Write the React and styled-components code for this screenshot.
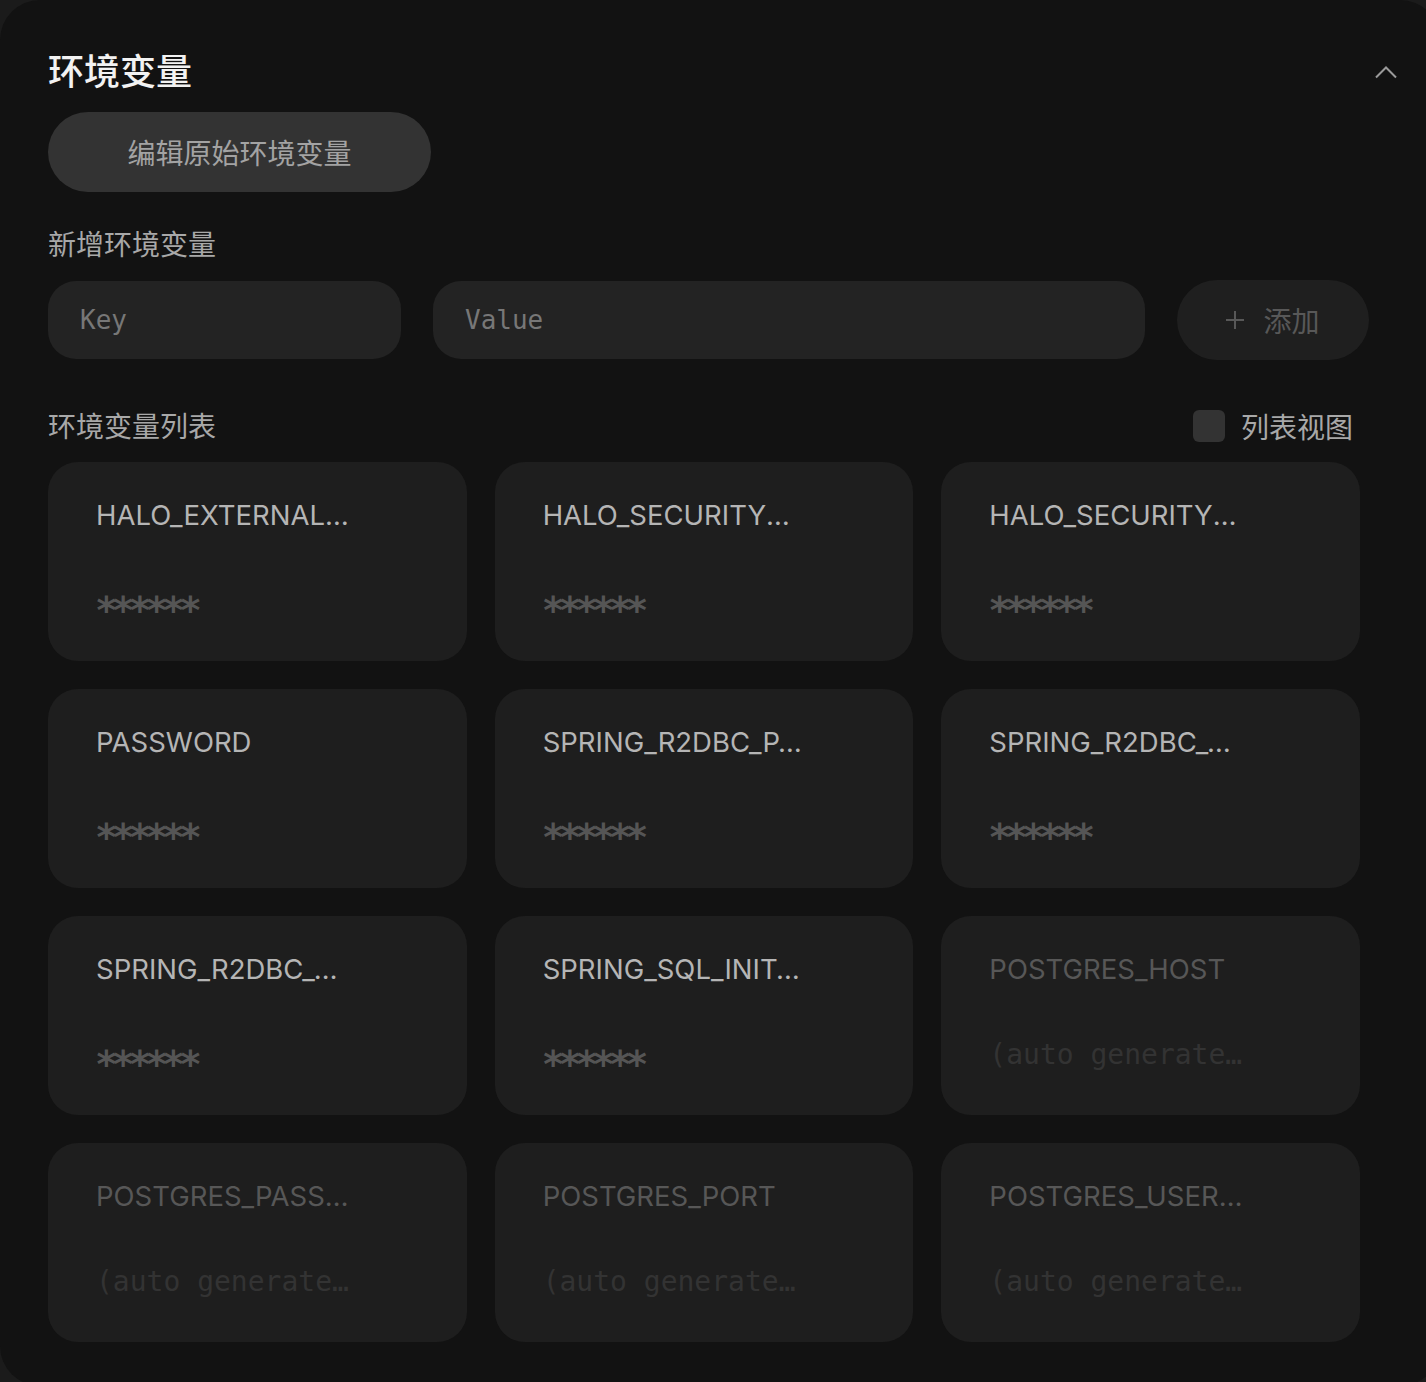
import React, { useState } from "react";
import styled, { createGlobalStyle } from "styled-components";

const GlobalStyle = createGlobalStyle`
  html, body {
    margin: 0;
    padding: 0;
    background: #1b1b1b;
    overflow: hidden;
  }
  * { box-sizing: border-box; }
`;

const sans = `Inter, "Noto Sans CJK SC", sans-serif`;
const cjk = `"Noto Sans", "Noto Sans CJK SC", sans-serif`;
const mono = `"DejaVu Sans Mono", monospace`;

const vars = [
  { key: "HALO_EXTERNAL_URL", value: "******" },
  { key: "HALO_SECURITY_INITIALIZER_USERNAME", value: "******" },
  { key: "HALO_SECURITY_INITIALIZER_PASSWORD", value: "******" },
  { key: "PASSWORD", value: "******" },
  { key: "SPRING_R2DBC_PASSWORD", value: "******" },
  { key: "SPRING_R2DBC_URL", value: "******" },
  { key: "SPRING_R2DBC_USERNAME", value: "******" },
  { key: "SPRING_SQL_INIT_PLATFORM", value: "******" },
  { key: "POSTGRES_HOST", value: "(auto generated)", auto: true },
  { key: "POSTGRES_PASSWORD", value: "(auto generated)", auto: true },
  { key: "POSTGRES_PORT", value: "(auto generated)", auto: true },
  { key: "POSTGRES_USERNAME", value: "(auto generated)", auto: true },
];

const Panel = styled.section`
  width: 1440px;
  min-height: 1386px;
  background: #121212;
  border-radius: 40px;
  padding: 50px 43px 40px 48px;
`;

const Header = styled.div`
  display: flex;
  align-items: center;
  justify-content: space-between;
  height: 44px;
`;

const Title = styled.h2`
  margin: 0;
  font-family: ${cjk};
  font-size: 36px;
  font-weight: 500;
  line-height: 44px;
  color: #f2f2f2;
`;

const Collapse = styled.button`
  background: none;
  border: 0;
  padding: 0;
  width: 22px;
  height: 22px;
  display: flex;
  align-items: center;
  justify-content: center;
  color: #9a9a9a;
  cursor: pointer;
`;

const RawButton = styled.button`
  margin-top: 18px;
  width: 383px;
  height: 80px;
  border: 0;
  border-radius: 40px;
  background: #333333;
  color: #a3a3a3;
  font-family: ${cjk};
  font-size: 28px;
  cursor: pointer;
`;

const Label = styled.div`
  margin-top: ${(p) => p.$top}px;
  font-family: ${cjk};
  font-size: 28px;
  line-height: 36px;
  color: #a8a8a8;
`;

const InputRow = styled.div`
  margin-top: 18px;
  width: 1321px;
  display: flex;
  align-items: center;
  gap: 32px;
`;

const Field = styled.input`
  flex: none;
  width: ${(p) => (p.$wide ? 712 : 353)}px;
  min-width: 0;
  height: 78px;
  border: 0;
  outline: none;
  border-radius: 28px;
  background: #232323;
  padding: 0 32px;
  font-family: ${mono};
  font-size: 26px;
  color: #cfcfcf;
  &::placeholder { color: #777777; }
`;

const AddButton = styled.button`
  flex: 1;
  height: 80px;
  border: 0;
  border-radius: 40px;
  background: #1f1f1f;
  color: #585858;
  font-family: ${cjk};
  font-size: 28px;
  display: flex;
  align-items: center;
  justify-content: center;
  gap: 19px;
  cursor: pointer;
`;

const ListHeader = styled.div`
  margin-top: 48px;
  width: 1305px;
  display: flex;
  align-items: center;
  justify-content: space-between;
  height: 36px;
`;

const Toggle = styled.label`
  display: flex;
  align-items: center;
  gap: 16px;
  font-family: ${cjk};
  font-size: 28px;
  color: #a8a8a8;
  cursor: pointer;
`;

const Box = styled.span`
  width: 32px;
  height: 32px;
  border-radius: 6px;
  background: ${(p) => (p.$on ? "#666" : "#333333")};
`;

const Grid = styled.div`
  margin-top: 18px;
  width: 1312px;
  display: grid;
  grid-template-columns: repeat(3, 1fr);
  gap: 28px;
`;

const Card = styled.div`
  height: 199px;
  border-radius: 30px;
  background: #1e1e1e;
  padding: 37px 48px 0;
  display: flex;
  flex-direction: column;
`;

const CardKey = styled.div`
  max-width: 260px;
  font-family: ${sans};
  font-size: 27.5px;
  line-height: 32px;
  color: ${(p) => (p.$dim ? "#575757" : "#b5b5b5")};
  white-space: nowrap;
  overflow: hidden;
  text-overflow: ellipsis;
`;

const CardValue = styled.div`
  margin-top: 53px;
  max-width: 264px;
  font-family: ${mono};
  font-size: 28px;
  line-height: 34px;
  color: ${(p) => (p.$dim ? "#333333" : "#555555")};
  white-space: nowrap;
  overflow: hidden;
  text-overflow: ellipsis;
`;

const Masked = styled(CardValue)`
  margin-top: 62px;
  margin-left: -1px;
  font-size: 38px;
  font-weight: 700;
  letter-spacing: -6.1px;
`;

export default function App() {
  const [listView, setListView] = useState(false);

  return (
    <>
      <GlobalStyle />
      <Panel>
        <Header>
          <Title>环境变量</Title>
          <Collapse aria-label="collapse">
            <svg width="22" height="13" viewBox="0 0 22 13" fill="none">
              <path d="M1 11.5 L11 1.5 L21 11.5" stroke="currentColor" strokeWidth="2" />
            </svg>
          </Collapse>
        </Header>
        <RawButton>编辑原始环境变量</RawButton>

        <Label $top={34}>新增环境变量</Label>
        <InputRow>
          <Field placeholder="Key" />
          <Field $wide placeholder="Value" />
          <AddButton>
            <svg width="18" height="18" viewBox="0 0 18 18" fill="none">
              <path d="M9 0 V18 M0 9 H18" stroke="currentColor" strokeWidth="2" />
            </svg>
            <span>添加</span>
          </AddButton>
        </InputRow>

        <ListHeader>
          <Label $top={0}>环境变量列表</Label>
          <Toggle onClick={() => setListView(!listView)}>
            <Box $on={listView} />
            列表视图
          </Toggle>
        </ListHeader>

        <Grid>
          {vars.map((v) => (
            <Card key={v.key}>
              <CardKey $dim={v.auto}>{v.key}</CardKey>
              {v.auto ? (
                <CardValue $dim>{v.value}</CardValue>
              ) : (
                <Masked>{v.value}</Masked>
              )}
            </Card>
          ))}
        </Grid>
      </Panel>
    </>
  );
}
